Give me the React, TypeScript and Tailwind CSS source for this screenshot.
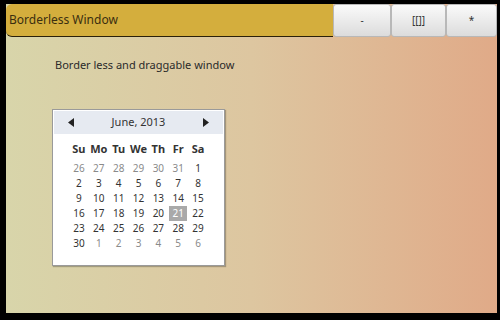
import React from 'react'

const weeks = [
  [26, 27, 28, 29, 30, 31, 1],
  [2, 3, 4, 5, 6, 7, 8],
  [9, 10, 11, 12, 13, 14, 15],
  [16, 17, 18, 19, 20, 21, 22],
  [23, 24, 25, 26, 27, 28, 29],
  [30, 1, 2, 3, 4, 5, 6],
]
const days = ['Su', 'Mo', 'Tu', 'We', 'Th', 'Fr', 'Sa']

function Calendar() {
  return (
    <div className="w-[173px] h-[157px] bg-white border border-[#9a9a9a] shadow-[1px_1px_1px_rgba(0,0,0,0.25)] p-px">
      <div className="h-[23px] bg-[#e6eaf1] flex items-center justify-between px-[14px]">
        <svg width="6" height="9" viewBox="0 0 6 9"><path d="M6 0 L0 4.5 L6 9 Z" fill="#222" /></svg>
        <span className="text-[11px] text-[#333]">June, 2013</span>
        <svg width="6" height="9" viewBox="0 0 6 9"><path d="M0 0 L6 4.5 L0 9 Z" fill="#222" /></svg>
      </div>
      <div className="px-[15px] pt-[7px]">
        <div className="grid grid-cols-7 h-[16px] items-center mb-[4px]">
          {days.map(d => (
            <span key={d} className="text-center text-[11px] font-bold text-[#333]">{d}</span>
          ))}
        </div>
        {weeks.map((w, i) => (
          <div key={i} className="grid grid-cols-7 h-[15px] items-center">
            {w.map((n, j) => {
              const muted = (i === 0 && n > 20) || (i === 5 && n < 20)
              const sel = i === 3 && n === 21
              return (
                <span key={j} className={sel
                  ? 'text-center text-[10px] leading-[15px] bg-[#a9a9a9] text-white mx-px'
                  : muted
                    ? 'text-center text-[10px] leading-[15px] text-[#8a8a8a]'
                    : 'text-center text-[10px] leading-[15px] text-[#333]'}>{n}</span>
              )
            })}
          </div>
        ))}
      </div>
    </div>
  )
}

export default function App() {
  return (
    <div className="w-[500px] h-[320px] bg-black pt-[4px] pl-[6px] pr-[3px] pb-[7px] font-['Noto_Sans',sans-serif]">
      <div className="h-full flex flex-col bg-gradient-to-r from-[#d8d5aa] via-[#ddc6a0] to-[#e0aa88]">
        <div className="h-[33px] flex shrink-0">
          <div className="flex-1 bg-[#d4ae3d] rounded-l-[6px] border-b border-[#2a200a] flex items-center pl-[3px]">
            <span className="text-[12px] text-[#3b2e10]">Borderless Window</span>
          </div>
          <button className="w-[58px] h-[33px] rounded-[3px] border border-[#b8b8b8] bg-gradient-to-b from-[#fafafa] to-[#dcdcdc] text-[10px] text-[#333]">-</button>
          <button className="w-[55px] h-[33px] rounded-[3px] border border-[#b8b8b8] bg-gradient-to-b from-[#fafafa] to-[#dcdcdc] text-[10px] text-[#333]">[[]]</button>
          <button className="w-[51px] h-[33px] rounded-[3px] border border-[#b8b8b8] bg-gradient-to-b from-[#fafafa] to-[#dcdcdc] text-[10px] text-[#333]">*</button>
        </div>
        <div className="pl-[49px] pt-[20px]">
          <p className="text-[11px] text-[#2a2a2a]">Border less and draggable window</p>
          <div className="mt-[35px] ml-[-3px]">
            <Calendar />
          </div>
        </div>
      </div>
    </div>
  )
}
